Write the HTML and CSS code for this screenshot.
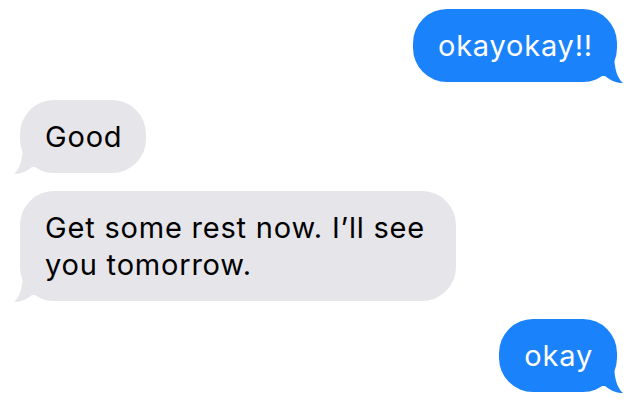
FILE: index.html
```html
<!DOCTYPE html>
<html lang="en">
<head>
  <meta charset="UTF-8">
  <title>Messages</title>
  <link rel="stylesheet" href="styles.css">
</head>
<body>
  <div class="chat">
    <div class="bubble sent">
      okayokay!!
      <svg class="tail" viewBox="0 0 34 27" width="34" height="27"><path d="M10 0 L23 0 C23.5 12 26 22 32 27 C27 27.5 20 25 14 20 L10 20 Z"/></svg>
    </div>
    <div class="bubble received">
      Good
      <svg class="tail" viewBox="0 0 34 27" width="34" height="27"><path d="M10 0 L23 0 C23.5 12 26 22 32 27 C27 27.5 20 25 14 20 L10 20 Z"/></svg>
    </div>
    <div class="bubble received">
      Get some rest now. I’ll see you tomorrow.
      <svg class="tail" viewBox="0 0 34 27" width="34" height="27"><path d="M10 0 L23 0 C23.5 12 26 22 32 27 C27 27.5 20 25 14 20 L10 20 Z"/></svg>
    </div>
    <div class="bubble sent">
      okay
      <svg class="tail" viewBox="0 0 34 27" width="34" height="27"><path d="M10 0 L23 0 C23.5 12 26 22 32 27 C27 27.5 20 25 14 20 L10 20 Z"/></svg>
    </div>
  </div>
</body>
</html>
```

FILE: styles.css
```css
* {
  margin: 0;
  padding: 0;
  box-sizing: border-box;
}

body {
  font-family: Inter, 'Liberation Sans', Arial, sans-serif;
  background: #fff;
  width: 640px;
  height: 411px;
  overflow: hidden;
}

.chat {
  display: flex;
  flex-direction: column;
  gap: 18px;
  padding: 9px 23px 0 20px;
}

.bubble {
  position: relative;
  max-width: 436px;
  padding: 18px 24px 18px 25px;
  border-radius: 34px;
  font-size: 29px;
  letter-spacing: 0.8px;
  line-height: 37px;
}

.sent {
  align-self: flex-end;
  background-color: #1a82fb;
  color: #fff;
}

.received {
  align-self: flex-start;
  background-color: #e5e5ea;
  color: #000;
}

.tail {
  position: absolute;
  bottom: -1px;
  display: block;
}

.sent .tail {
  right: -8px;
  fill: #1a82fb;
}

.received .tail {
  left: -8px;
  fill: #e5e5ea;
  transform: scaleX(-1);
}
```
